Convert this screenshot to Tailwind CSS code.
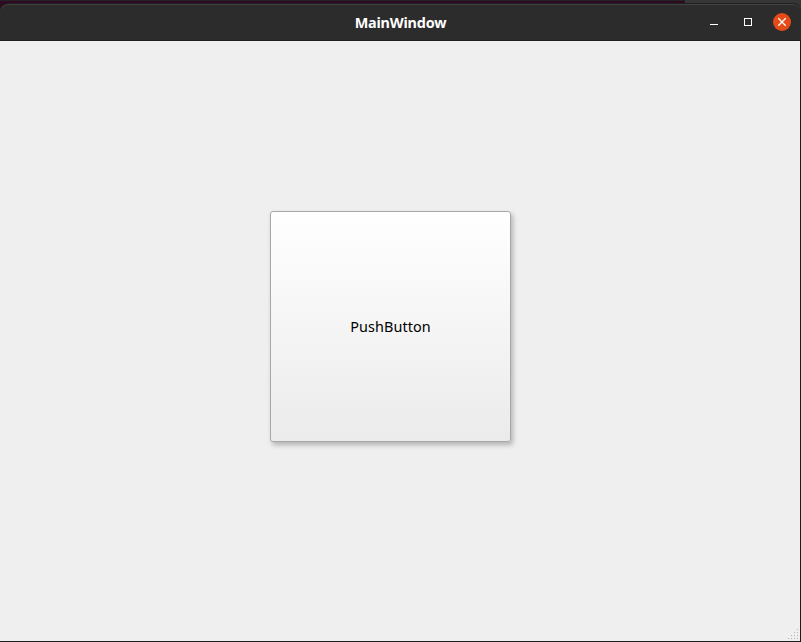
<!DOCTYPE html>
<html lang="en">
<head>
<meta charset="utf-8">
<title>MainWindow</title>
<script src="https://cdn.jsdelivr.net/npm/@tailwindcss/browser@4"></script>
</head>
<body class="h-[642px] w-[801px] overflow-hidden bg-[#262626] font-['Noto_Sans','Open_Sans',sans-serif]">
<div class="flex h-full flex-col bg-[linear-gradient(90deg,#242424_685px,#363636_685px),linear-gradient(90deg,#300a24_685px,#363636_685px)] bg-[length:100%_1px,100%_100%] bg-no-repeat">
  <div class="h-[3px] shrink-0"></div>
  <div class="flex min-h-0 flex-1 flex-col overflow-hidden rounded-t-[8px] border-t border-[#202020] bg-[#1c1c1c] pr-px pb-px">
    <header class="-mr-px grid h-[37px] shrink-0 grid-cols-[1fr_auto_1fr] items-center rounded-t-[8px] border-b border-b-[#1f1f1f] bg-[#2c2c2c] shadow-[inset_0_1px_0_#414141]">
      <span></span>
      <h1 class="pt-[2px] text-[14.4px] leading-5 font-bold tracking-[-0.2px] text-white">MainWindow</h1>
      <div class="flex items-center justify-end gap-4 pr-[10px]">
        <button class="flex size-[18px] items-center justify-center" aria-label="Minimize">
          <svg width="18" height="18" viewBox="0 0 18 18" shape-rendering="crispEdges"><path d="M5 11h8v1H5z" fill="#fff"/></svg>
        </button>
        <button class="flex size-[18px] items-center justify-center" aria-label="Maximize">
          <svg width="18" height="18" viewBox="0 0 18 18" shape-rendering="crispEdges"><path d="M5.500 5.500h7v7h-7z" fill="none" stroke="#fff"/></svg>
        </button>
        <button class="flex size-[18px] items-center justify-center" aria-label="Close">
          <svg width="18" height="18" viewBox="0 0 18 18"><circle cx="9" cy="9" r="9" fill="#e44b18"/><path d="M5.300 5.300l7.400 7.400M12.700 5.300l-7.400 7.400" fill="none" stroke="#fff" stroke-width="1.300"/></svg>
        </button>
      </div>
    </header>
    <main class="flex min-h-0 flex-1 flex-col justify-between bg-[#efefef]">
      <div class="pt-[170px] pl-[270px]">
        <button class="flex h-[231px] w-[241px] items-center justify-center rounded-[3px] border border-[#a8a8a8] bg-linear-to-b from-white to-[#ebebeb] text-[14.4px] leading-5 tracking-[0.1px] text-black shadow-[2px_3px_5px_rgba(0,0,0,0.25)]">PushButton</button>
      </div>
      <svg class="self-end" width="15" height="16" viewBox="0 0 15 16" fill="#b4b4b4" shape-rendering="crispEdges"><path d="M12 4h1v1h-1zM9 7h1v1H9zM12 7h1v1h-1zM6 10h1v1H6zM9 10h1v1H9zM12 10h1v1h-1zM3 13h1v1H3zM6 13h1v1H6zM9 13h1v1H9zM12 13h1v1h-1z"/></svg>
    </main>
  </div>
</div>
</body>
</html>
